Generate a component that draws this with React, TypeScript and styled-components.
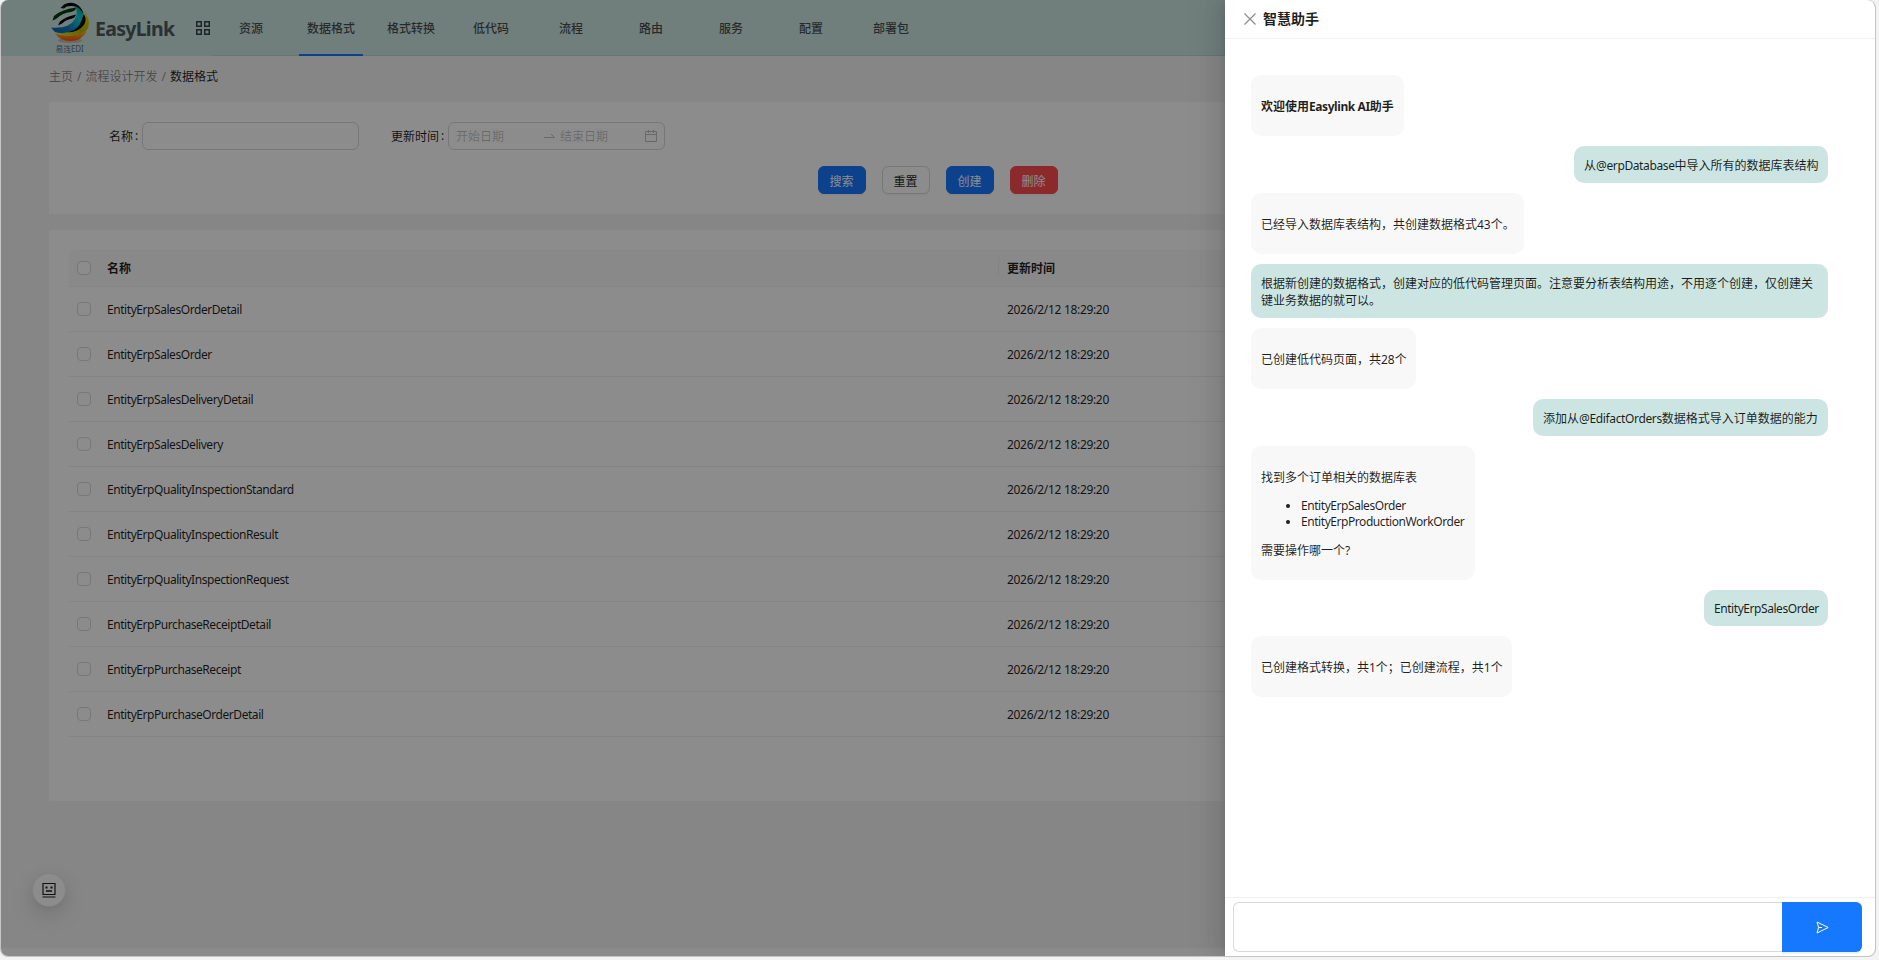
import React from "react";
import styled, { createGlobalStyle, css } from "styled-components";

const Global = createGlobalStyle`
  * { box-sizing: border-box; }
  html, body { margin: 0; padding: 0; background: #f3f3f3; }
  body {
    width: 1879px; height: 960px; overflow: hidden;
    font-family: "Noto Sans", "Noto Sans CJK SC", sans-serif;
    font-size: 12px; color: rgba(0,0,0,.88);
  }
`;

const Window = styled.div`
  position: relative;
  width: 1876px; height: 957px;
  overflow: hidden;
  border: 1px solid #c4c4c4; border-top: 0;
  border-radius: 8px;
  background: #f5f5f5;
`;
const Page = styled.div`
  display: flex; flex-direction: column;
  width: 1874px; height: 956px;
  border-bottom: 8px solid #fdfdfd;
`;
const Header = styled.header`
  display: flex; align-items: stretch;
  height: 56px; padding-left: 48px;
  background: #cce5e2;
`;
const Brand = styled.div`
  display: flex; width: 162px;
`;
const LogoBox = styled.div`
  display: flex; flex-direction: column; align-items: center;
  width: 41px; padding-top: 2px;
`;
const LogoCaption = styled.span`
  margin-top: 0;
  font-size: 8px; line-height: 9px; letter-spacing: -.2px; color: rgba(40,50,70,.7);
  white-space: nowrap;
`;
const BrandName = styled.span`
  width: 80px; margin-left: 5px; padding-top: 15px; flex: none;
  font: 700 19.5px/28px "Noto Sans", sans-serif; letter-spacing: -.72px;
  color: #4b5a5c;
`;
const GridIcon = styled.svg`
  display: block; margin: 21px 0 0 21px; flex: none;
`;
const Nav = styled.nav`
  display: flex; flex: 1; border-bottom: 1px solid #c0d4d2;
`;
const NavItem = styled.a<{ $active?: boolean }>`
  display: flex; align-items: center; justify-content: center;
  width: 80px; height: 56px; flex: none;
  font-size: 12px; font-weight: 500; color: rgba(0,0,0,.68);
  position: relative;
  ${p => p.$active && css`
    &::after { content: ""; position: absolute; left: 8px; right: 8px; bottom: 0; height: 2px; background: #1677ff; }
  `}
`;
const Breadcrumb = styled.div`
  display: flex; gap: 4px;
  height: 46px; padding: 12px 0 0 48px;
  line-height: 18px; color: rgba(0,0,0,.45);
`;
const Current = styled.span` color: rgba(0,0,0,.88); `;
const Card = styled.section<{ $h: number }>`
  flex: none; height: ${p => p.$h}px;
  margin: 0 48px 16px; background: #fff;
`;
const Fields = styled.div`
  display: flex; align-items: center; height: 68px; padding: 0 0 0 60px;
`;
const Label = styled.label<{ $ml?: number }>`
  margin: 0 3px 0 ${p => p.$ml || 0}px; white-space: nowrap;
  display: flex;
`;
const Colon = styled.span` width: 4px; margin-left: 2px; `;
const Input = styled.div<{ $w: number }>`
  display: flex; align-items: center;
  width: ${p => p.$w}px; height: 28px; padding: 0 7px;
  border: 1px solid #d9d9d9; border-radius: 6px; color: rgba(0,0,0,.25);
`;
const DatePart = styled.span<{ $w: number; $gap?: number }>`
  width: ${p => p.$w}px; margin-left: ${p => p.$gap || 0}px;
`;
const Actions = styled.div`
  display: flex; gap: 16px; justify-content: center; margin-top: -4px; padding-right: 1px;
`;
const Button = styled.button<{ $kind?: "primary" | "danger"; $drop?: number }>`
  width: 48px; height: 28px; padding: ${p => p.$drop ?? 3}px 0 0;
  font: inherit; line-height: 23px; border-radius: 6px;
  border: 1px solid ${p => p.$kind === "primary" ? "#1677ff" : p.$kind === "danger" ? "#ff4d4f" : "#d9d9d9"};
  background: ${p => p.$kind === "primary" ? "#1677ff" : p.$kind === "danger" ? "#ff4d4f" : "#fff"};
  color: ${p => p.$kind ? "#fff" : "rgba(0,0,0,.88)"};
  box-shadow: 0 2px 0 rgba(0,0,0,.03);
`;
const Table = styled.div` margin: 0 20px; padding-top: 20px; `;
const Row = styled.div<{ $head?: boolean }>`
  display: grid; grid-template-columns: 38px 900px 1fr; align-items: center;
  height: ${p => p.$head ? 37 : 45}px;
  border-bottom: 1px solid #f0f0f0;
  ${p => p.$head && css`
    font-weight: 700; background: #fafafa; border-radius: 8px 8px 0 0;
  `}
`;
const Check = styled.span`
  width: 14px; height: 14px; margin-left: 8px; margin-top: -1px;
  border: 1px solid #d9d9d9; border-radius: 4px; background: #fff;
`;
const HeadName = styled.span`
  position: relative;
  &::after { content: ""; position: absolute; right: 8px; top: -2px; width: 1px; height: 20px; background: #f0f0f0; }
`;
const Latin = styled.span<{ $ls?: number }>` letter-spacing: ${p => p.$ls ?? -0.44}px; `;

const Float = styled.div`
  position: absolute; left: 31px; top: 873px;
  display: flex; align-items: center; justify-content: center;
  width: 34px; height: 34px; border-radius: 50%; background: #fff;
  border: 1px solid #ebebeb;
  box-shadow: 0 6px 16px rgba(0,0,0,.08), 0 3px 6px -4px rgba(0,0,0,.12), 0 9px 28px 8px rgba(0,0,0,.05);
`;
const Mask = styled.div`
  position: absolute; inset: 0; background: rgba(0,0,0,.45);
`;
const Drawer = styled.aside`
  position: absolute; top: 0; right: 0; bottom: 0;
  display: flex; flex-direction: column;
  width: 650px; background: #fff;
  box-shadow: -6px 0 16px rgba(0,0,0,.08), -3px 0 6px -4px rgba(0,0,0,.12), -9px 0 28px 8px rgba(0,0,0,.05);
`;
const DrawerHead = styled.div`
  display: flex; align-items: center; gap: 7px;
  height: 39px; padding: 0 0 1px 19px; border-bottom: 1px solid #f0f0f0;
`;
const DrawerTitle = styled.span`
  margin-top: -2px; font-size: 14px; font-weight: 700;
`;
const Messages = styled.div`
  display: flex; flex-direction: column; gap: 10px; align-items: flex-start;
  flex: 1; padding: 36px 47px 0 26px;
`;
const Bubble = styled.div<{ $mine?: boolean; $h: number; $w: number; $drop?: number }>`
  display: flex; flex-direction: column; justify-content: center;
  align-self: ${p => p.$mine ? "flex-end" : "flex-start"};
  width: ${p => p.$w}px; height: ${p => p.$h}px; padding: ${p => p.$drop ?? 2}px 0 0 10px;
  border-radius: 10px; line-height: 17px; white-space: nowrap;
  background: ${p => p.$mine ? "#cce5e2" : "#f8f8f8"};
`;
const Options = styled.ul`
  margin: 12px 0; padding-left: 40px; line-height: 16px;
`;
const Composer = styled.div`
  display: flex; height: 59px; padding: 4px 13px 4px 8px; border-top: 1px solid #f0f0f0;
`;
const TextField = styled.div`
  flex: 1; height: 50px; border: 1px solid #d9d9d9; border-right: 0; border-radius: 6px 0 0 6px;
`;
const Send = styled.button`
  display: flex; align-items: center; justify-content: center;
  width: 80px; height: 50px; padding: 1px 0 0 0; border: 0; border-radius: 0 6px 6px 0; background: #1677ff;
  box-shadow: 0 2px 0 rgba(5,145,255,.1);
`;

const Logo = () => (
  <svg width="40" height="42" viewBox="0 0 40 42">
    <defs>
      <linearGradient id="lb" x1="0" y1="1" x2="1" y2="0">
        <stop offset="0" stopColor="#0a58b4" /><stop offset=".35" stopColor="#0c7cc4" /><stop offset=".7" stopColor="#10d2dc" /><stop offset="1" stopColor="#088" />
      </linearGradient>
      <linearGradient id="ly" x1="0" y1="1" x2="1" y2="0">
        <stop offset="0" stopColor="#f2e81c" /><stop offset=".5" stopColor="#b8b008" /><stop offset="1" stopColor="#f0e000" />
      </linearGradient>
      <linearGradient id="lo" x1="0" y1="0" x2="0" y2="1">
        <stop offset="0" stopColor="#ffc21c" /><stop offset="1" stopColor="#f4520c" />
      </linearGradient>
    </defs>
    <ellipse cx="20" cy="38.500" rx="12" ry="2.500" fill="#d0683a" opacity=".35" />
    <path d="M5 31 Q17 37 37 29 Q32 39 20 39 Q10 39 5 31Z" fill="url(#lo)" />
    <path d="M3 28 Q25 31 33 21 Q37 15 34 9 Q42 19 37 28 Q29 35 13 33 Q6 31 3 28Z" fill="url(#ly)" />
    <path d="M17 30 Q26 28 30 20 L34 12 Q38 20 32 25 Q26 31 17 30Z" fill="#050805" />
    <path d="M1 25.500 Q19 27 25 17 Q29 9 24 2.500 Q33 5 33 12 Q32 23 24 28 Q14 33 5 30Z" fill="url(#lb)" />
    <path d="M10.500 6 L14 2.500 Q20 -.5 26 2 Q32 5 34 13 Q30 4 22 4 Q16 3.500 14 6.500Z" fill="#050505" />
    <path d="M2.500 18.500 L4 14 Q11 7.500 26 5.500 Q26 9 21 10 Q12 11 6 17Z" fill="#063b0b" />
    <path d="M8 23.500 L10 19.500 Q16 14.500 26 12.500 Q25 16.500 20 17 Q15 18 12 21.500Z" fill="#050505" />
  </svg>
);

const nav = ["资源", "数据格式", "格式转换", "低代码", "流程", "路由", "服务", "配置", "部署包"];
const rows = [
  "EntityErpSalesOrderDetail", "EntityErpSalesOrder", "EntityErpSalesDeliveryDetail", "EntityErpSalesDelivery",
  "EntityErpQualityInspectionStandard", "EntityErpQualityInspectionResult", "EntityErpQualityInspectionRequest",
  "EntityErpPurchaseReceiptDetail", "EntityErpPurchaseReceipt", "EntityErpPurchaseOrderDetail",
];

export default function App() {
  return (
    <>
      <Global />
      <Window>
        <Page>
          <Header>
            <Brand>
              <LogoBox><Logo /><LogoCaption>易连EDI</LogoCaption></LogoBox>
              <BrandName>EasyLink</BrandName>
              <GridIcon width="14" height="14" viewBox="0 0 14 14" fill="none" stroke="#344" strokeWidth="1.500">
                <path d="M.75 .75h4.500v4.500h-4.500zM8.750 .75h4.500v4.500h-4.500zM.75 8.750h4.500v4.500h-4.500zM8.750 8.750h4.500v4.500h-4.500z" />
              </GridIcon>
            </Brand>
            <Nav>{nav.map((n, i) => <NavItem key={n} $active={i === 1}>{n}</NavItem>)}</Nav>
          </Header>
          <Breadcrumb>
            <span>主页</span><span>/</span><span>流程设计开发</span><span>/</span><Current>数据格式</Current>
          </Breadcrumb>
          <Card $h={112}>
            <Fields>
              <Label>名称<Colon>:</Colon></Label><Input $w={217} />
              <Label $ml={32}>更新时间<Colon>:</Colon></Label>
              <Input $w={217}>
                <DatePart $w={88}>开始日期</DatePart>
                <svg width="11" height="6" viewBox="0 0 11 6" fill="none" stroke="#bfbfbf" strokeWidth="1"><path d="M0 4.500H10.500L7 1" /></svg>
                <DatePart $w={85} $gap={5}>结束日期</DatePart>
                <svg width="12" height="12" viewBox="0 0 12 12" fill="none" stroke="#bfbfbf" strokeWidth="1"><path d="M.5 1.500H11.500V11.500H.5zM.5 4.500H11.500M3.500 0V3M8.500 0V3" /></svg>
              </Input>
            </Fields>
            <Actions>
              <Button $kind="primary">搜索</Button><Button>重置</Button>
              <Button $kind="primary" $drop={2}>创建</Button><Button $kind="danger">删除</Button>
            </Actions>
          </Card>
          <Card $h={571}>
            <Table>
              <Row $head><Check /><HeadName>名称</HeadName><span>更新时间</span></Row>
              {rows.map(r => (
                <Row key={r}><Check /><Latin>{r}</Latin><Latin $ls={-0.32}>2026/2/12 18:29:20</Latin></Row>
              ))}
            </Table>
          </Card>
        </Page>
        <Float>
          <svg width="14" height="16" viewBox="0 0 14 16" fill="none" stroke="#1f1f1f">
            <path d="M1 1.500H13V12.500H1zM.5 15H13.500" strokeWidth="1.200" />
            <path d="M3.500 5.500H5.500M8.500 5.500H10.500" strokeWidth="2" /><path d="M4 9H10" strokeWidth="1.400" />
          </svg>
        </Float>
        <Mask />
        <Drawer>
          <DrawerHead>
            <svg width="12" height="12" viewBox="0 0 12 12" stroke="#8c8c8c" strokeWidth="1.200"><path d="M.5 .5l11 11M11.500 .5l-11 11" /></svg>
            <DrawerTitle>智慧助手</DrawerTitle>
          </DrawerHead>
          <Messages>
            <Bubble $w={153} $h={61}><strong>欢迎使用<Latin $ls={-0.42}>Easylink AI</Latin>助手</strong></Bubble>
            <Bubble $mine $w={254} $h={37}><span>从<Latin $ls={-0.38}>@erpDatabase</Latin>中导入所有的数据库表结构</span></Bubble>
            <Bubble $w={273} $h={61}><span>已经导入数据库表结构，共创建数据格式43个。</span></Bubble>
            <Bubble $mine $w={577} $h={54}>
              <span>根据新创建的数据格式，创建对应的低代码管理页面。注意要分析表结构用途，不用逐个创建，仅创建关<br />键业务数据的就可以。</span>
            </Bubble>
            <Bubble $w={165} $h={61}><span>已创建低代码页面，共28个</span></Bubble>
            <Bubble $mine $w={295} $h={37}><span>添加从<Latin $ls={-0.36}>@EdifactOrders</Latin>数据格式导入订单数据的能力</span></Bubble>
            <Bubble $w={224} $h={134}>
              <span>找到多个订单相关的数据库表</span>
              <Options><li><Latin>EntityErpSalesOrder</Latin></li><li><Latin>EntityErpProductionWorkOrder</Latin></li></Options>
              <span>需要操作哪一个?</span>
            </Bubble>
            <Bubble $mine $w={124} $h={36} $drop={1}><Latin>EntityErpSalesOrder</Latin></Bubble>
            <Bubble $w={261} $h={61}><span>已创建格式转换，共1个；已创建流程，共1个</span></Bubble>
          </Messages>
          <Composer>
            <TextField />
            <Send>
              <svg width="13" height="13" viewBox="0 0 13 13" fill="none" stroke="#fff" strokeWidth="1"><path d="M1 1L12.200 6.500L1 12L2.600 6.500zM2.600 6.500H6" /></svg>
            </Send>
          </Composer>
        </Drawer>
      </Window>
    </>
  );
}
